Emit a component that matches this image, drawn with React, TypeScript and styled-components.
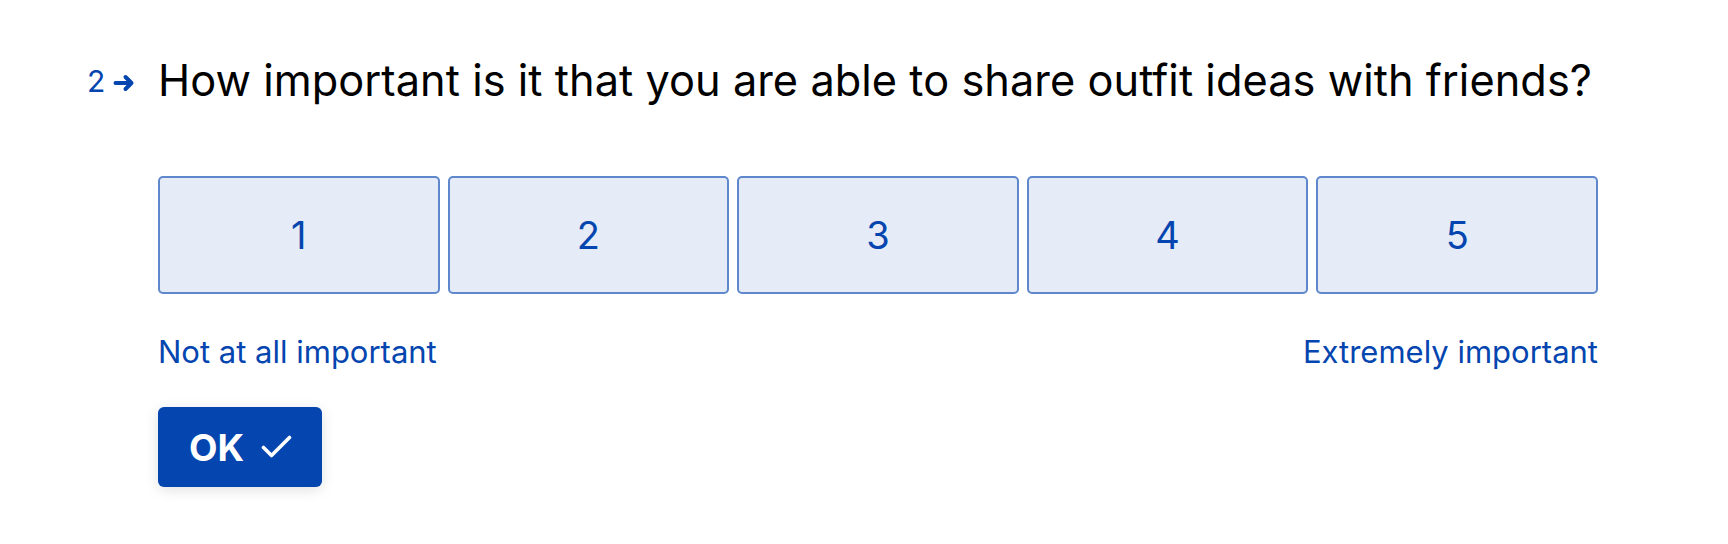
import styled, { createGlobalStyle } from "styled-components";

const GlobalStyle = createGlobalStyle`
  html, body {
    margin: 0;
    padding: 0;
    background: #ffffff;
  }
  body {
    font-family: Inter, "Noto Sans", "Liberation Sans", sans-serif;
    -webkit-font-smoothing: antialiased;
  }
`;

const BLUE = "#0445AF";

const Page = styled.div`
  width: 1728px;
  height: 544px;
  box-sizing: border-box;
  padding: 54px 0 0 87px;
  display: flex;
`;

const NumberCol = styled.div`
  width: 71px;
  flex-shrink: 0;
  display: flex;
  align-items: center;
  gap: 8px;
  height: 53px;
  color: ${BLUE};
  font-size: 30px;
  line-height: 1;
`;

const Content = styled.div`
  width: 1440px;
  display: flex;
  flex-direction: column;
`;

const Question = styled.h1`
  margin: 0;
  font-size: 43.3px;
  font-weight: 400;
  line-height: 53px;
  letter-spacing: 0.05px;
  color: #000000;
`;

const Scale = styled.div`
  margin-top: 69px;
  display: grid;
  grid-template-columns: repeat(5, 1fr);
  gap: 8px;
`;

const Choice = styled.button`
  height: 118px;
  box-sizing: border-box;
  border: 2px solid rgba(4, 69, 175, 0.6);
  border-radius: 5px;
  background: rgba(4, 69, 175, 0.1);
  color: ${BLUE};
  font-family: inherit;
  font-size: 38px;
  font-weight: 400;
  padding: 0;
  cursor: pointer;
  display: flex;
  align-items: center;
  justify-content: center;
`;

const Labels = styled.div`
  margin-top: 37px;
  display: flex;
  justify-content: space-between;
  color: ${BLUE};
  font-size: 31px;
  line-height: 41px;
`;

const OkButton = styled.button`
  margin-top: 35px;
  align-self: flex-start;
  height: 80px;
  padding: 0 30px 0 31px;
  border: none;
  border-radius: 6px;
  background: ${BLUE};
  color: #ffffff;
  font-family: inherit;
  font-size: 37px;
  font-weight: 700;
  display: flex;
  align-items: center;
  gap: 17px;
  box-shadow: 0 3px 14px rgba(0, 0, 0, 0.12);
  cursor: pointer;
`;

const ArrowIcon = () => (
  <svg width="22" height="18" viewBox="0 0 22 18" fill="none" style={{ marginTop: 4 }}>
    <path
      d="M2.5 9H18.5M12.5 3L18.5 9L12.5 15"
      stroke={BLUE}
      strokeWidth="4"
      strokeLinecap="round"
      strokeLinejoin="round"
    />
  </svg>
);

const CheckIcon = () => (
  <svg width="31" height="24" viewBox="0 0 31 24" fill="none">
    <path
      d="M2.5 12.5L10.5 20.5L28.5 2.5"
      stroke="#ffffff"
      strokeWidth="3.6"
      strokeLinecap="round"
      strokeLinejoin="round"
    />
  </svg>
);

export default function App() {
  const options = [1, 2, 3, 4, 5];
  return (
    <>
      <GlobalStyle />
      <Page>
        <NumberCol>
          <span>2</span>
          <ArrowIcon />
        </NumberCol>
        <Content>
          <Question>
            How important is it that you are able to share outfit ideas with friends?
          </Question>
          <Scale>
            {options.map((n) => (
              <Choice key={n}>{n}</Choice>
            ))}
          </Scale>
          <Labels>
            <span>Not at all important</span>
            <span>Extremely important</span>
          </Labels>
          <OkButton>
            OK
            <CheckIcon />
          </OkButton>
        </Content>
      </Page>
    </>
  );
}
